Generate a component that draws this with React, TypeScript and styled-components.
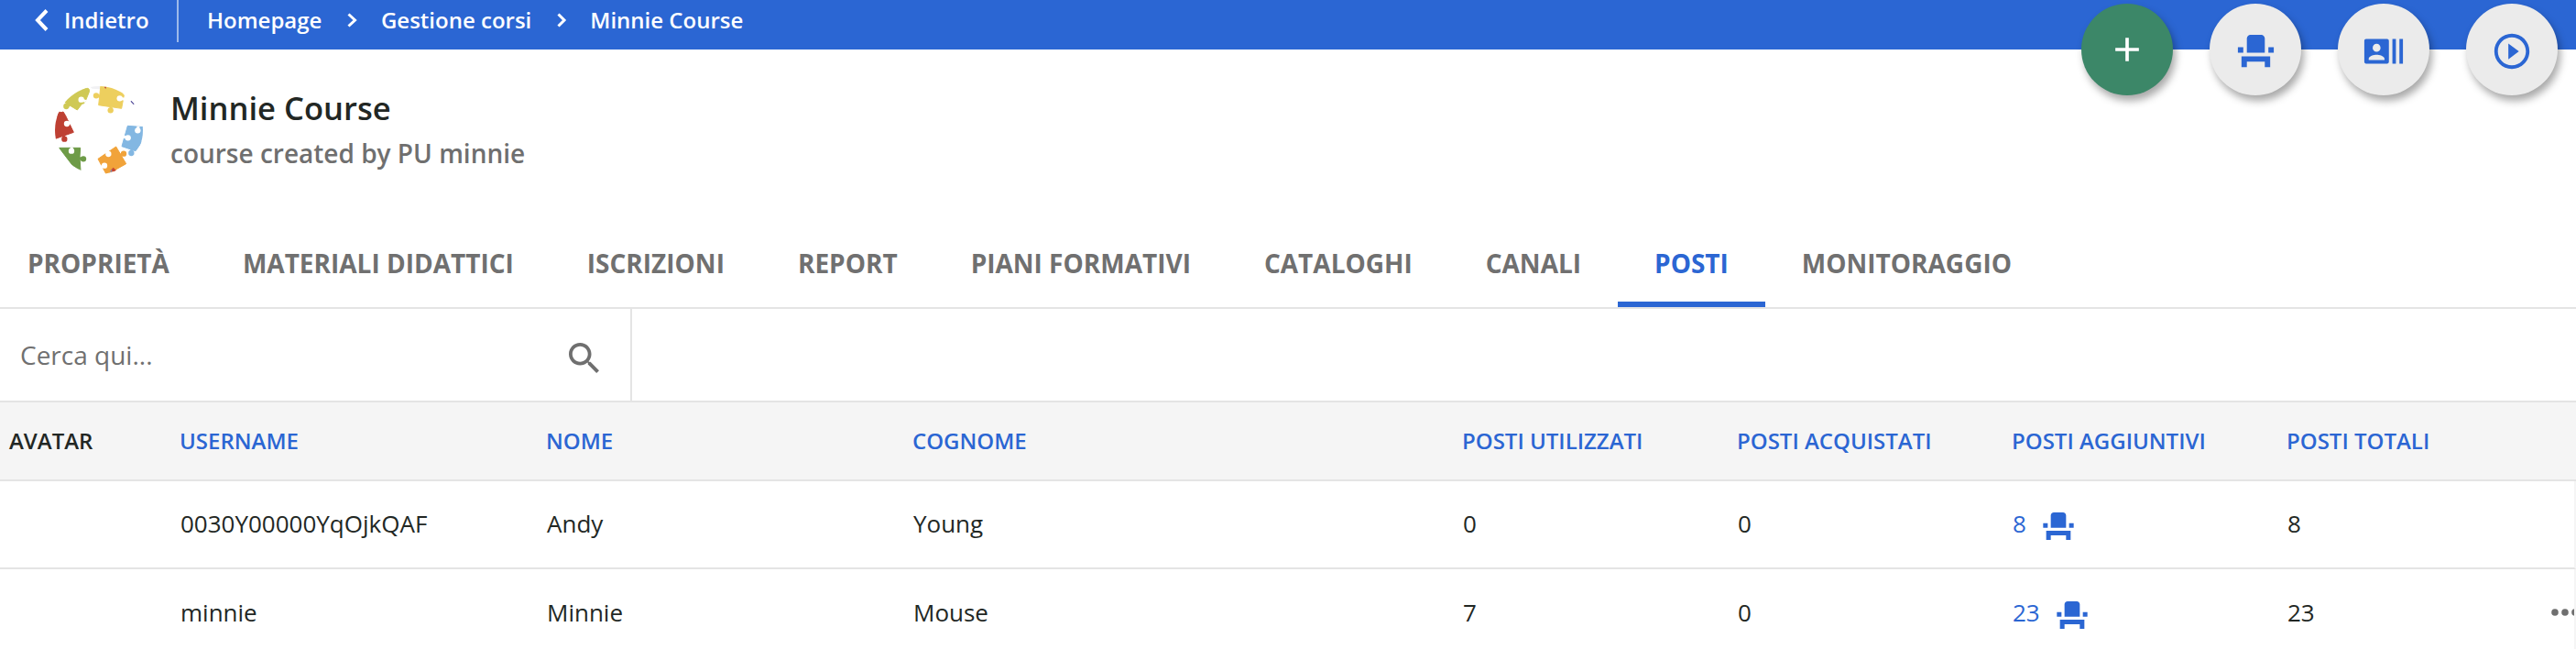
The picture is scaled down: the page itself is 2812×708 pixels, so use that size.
import React from "react";
import styled, { createGlobalStyle } from "styled-components";

const blue = "#2b66d3";

const GlobalStyle = createGlobalStyle`
  * { box-sizing: border-box; }
  body {
    margin: 0;
    background: #fff;
    color: #222724;
    font-family: "Open Sans", sans-serif;
    overflow: hidden;
  }
  button, input { font: inherit; border: 0; background: none; padding: 0; margin: 0; outline: 0; }
  svg { display: block; flex: none; }
`;

const Page = styled.div`
  width: 2812px;
  height: 708px;
  overflow: hidden;
  position: relative;
`;

const TopBar = styled.nav`
  display: flex;
  height: 54px;
  background: ${blue};
  color: #fff;
  font-size: 24px;
  font-weight: 600;
  line-height: 44px;
  padding-left: 37px;
`;

const BackLink = styled.a`
  display: flex;
  align-items: center;
  width: 158px;
  height: 46px;
  padding-bottom: 2px;
  gap: 17px;
  border-right: 2px solid #9db9ea;
  white-space: nowrap;
`;

const Crumbs = styled.div`
  display: flex;
  align-items: center;
  height: 44px;
  margin-left: 31px;
  gap: 27px;
`;

const Actions = styled.div`
  position: absolute;
  top: 4px;
  right: 20px;
  display: flex;
  gap: 40px;
`;

const RoundButton = styled.button<{ $primary?: boolean }>`
  display: flex;
  align-items: center;
  justify-content: center;
  width: 100px;
  height: 100px;
  padding-top: ${(p) => (p.$primary ? 0 : 3)}px;
  border-radius: 50%;
  background: ${(p) => (p.$primary ? "#3c8768" : "#ebebeb")};
  color: ${(p) => (p.$primary ? "#fff" : blue)};
  box-shadow: 3px 6px 8px rgba(0, 0, 0, 0.34);
`;

const CourseHeader = styled.header`
  display: flex;
  height: 187px;
  padding: 40px 0 0 60px;
`;

const CourseText = styled.div`
  margin-left: 30px;
`;

const CourseTitle = styled.h1`
  margin: 0;
  font-size: 34.600px;
  font-weight: 600;
  line-height: 48px;
`;

const CourseSubtitle = styled.p`
  margin: 3px 0 0;
  font-size: 28px;
  font-weight: 600;
  line-height: 44px;
  color: #6f6f6f;
`;

const Tabs = styled.div`
  display: flex;
  height: 96px;
  margin-left: -10px;
  border-bottom: 2px solid #e4e4e4;
`;

const Tab = styled.a<{ $active?: boolean }>`
  height: 94px;
  padding: 0 40px;
  font-size: 28px;
  font-weight: 700;
  line-height: 92px;
  white-space: nowrap;
  color: ${(p) => (p.$active ? blue : "#707070")};
  box-shadow: ${(p) => (p.$active ? `inset 0 -6px 0 ${blue}` : "none")};
`;

const SearchRow = styled.div`
  display: flex;
  height: 102px;
  border-bottom: 2px solid #e4e4e4;
`;

const SearchBox = styled.label`
  display: flex;
  align-items: center;
  width: 690px;
  padding: 0 34px 0 22px;
  border-right: 2px solid #e4e4e4;

  svg { margin-top: 6px; }
`;

const SearchInput = styled.input`
  flex: 1;
  font-size: 28px;
  &::placeholder { color: #707070; opacity: 1; }
`;

const Table = styled.div`
  width: 2812px;
`;

const Row = styled.div<{ $head?: boolean; $first?: boolean }>`
  display: grid;
  grid-template-columns: 186px 400px 400px 600px 300px 300px 300px 289px 25px;
  align-items: center;
  height: ${(p) => (p.$head ? 86 : 96)}px;
  padding: 0 0 ${(p) => (p.$first ? 2 : 0)}px 10px;
  background: ${(p) => (p.$head ? "#f5f5f5" : "#fff")};
  border-bottom: 2px solid #e4e4e4;
  border-right: ${(p) => (p.$head ? "none" : "2px solid #f5f5f5")};
  font-size: 26px;
`;

const HeadCell = styled.div<{ $plain?: boolean }>`
  font-size: 24px;
  font-weight: 600;
  line-height: 32px;
  white-space: nowrap;
  color: ${(p) => (p.$plain ? "#222724" : blue)};
`;

const Cell = styled.div<{ $link?: boolean }>`
  display: flex;
  gap: 15px;
  align-items: center;
  padding-left: 1px;
  line-height: 36px;
  color: ${(p) => (p.$link ? blue : "#222724")};

  svg { margin-top: 6px; }
`;

const MoreButton = styled.button`
  display: flex;
  width: 25px;
  overflow: hidden;
  color: #6f6f6f;
`;

const Chevron = ({ w, h, left, stroke }: { w: number; h: number; left?: boolean; stroke: number }) => (
  <svg width={w} height={h} viewBox={`0 0 ${w} ${h}`} fill="none" stroke="currentColor" strokeWidth={stroke} overflow="visible">
    <path d={left ? `M${w - 2} 1.5L4 ${h / 2}L${w - 2} ${h - 1.5}` : `M2.5 1.5L${w - 1} ${h / 2}L2.5 ${h - 1.5}`} />
  </svg>
);

const SeatIcon = ({ size }: { size: number }) => (
  <svg width={size} height={size} viewBox="0 0 24 24" fill="currentColor">
    <path d="M4 18v3h3v-3h10v3h3v-6H4zm15-8h3v3h-3zM2 10h3v3H2zm15 3H7V5c0-1.100.9-2 2-2h6c1.100 0 2 .9 2 2v8z" />
  </svg>
);

const PlusIcon = () => (
  <svg width="44" height="44" viewBox="0 0 24 24" fill="currentColor">
    <path d="M19 13h-6v6h-2v-6H5v-2h6V5h2v6h6v2z" />
  </svg>
);

const ContactsIcon = () => (
  <svg width="46" height="46" viewBox="0 0 24 24" fill="currentColor">
    <path d="M21 5v14h2V5h-2zm-4 14h2V5h-2v14zM14 5H2c-.55 0-1 .45-1 1v12c0 .55.45 1 1 1h12c.55 0 1-.45 1-1V6c0-.55-.45-1-1-1zM8 7.750c1.240 0 2.250 1.010 2.250 2.250S9.240 12.250 8 12.250 5.750 11.240 5.750 10 6.760 7.750 8 7.750zM12.500 17h-9v-.75c0-1.500 3-2.250 4.500-2.250s4.500.75 4.500 2.250V17z" />
  </svg>
);

const PlayIcon = () => (
  <svg width="46" height="46" viewBox="0 0 24 24" fill="currentColor">
    <path d="M10 16.500l6-4.500-6-4.500v9zM12 2C6.480 2 2 6.480 2 12s4.480 10 10 10 10-4.480 10-10S17.520 2 12 2zm0 18c-4.410 0-8-3.590-8-8s3.590-8 8-8 8 3.590 8 8-3.590 8-8 8z" />
  </svg>
);

const SearchIcon = () => (
  <svg width="33" height="33" viewBox="3 3 17.5 17.5" fill="#6f6f6f">
    <path d="M15.500 14h-.79l-.28-.27C15.410 12.590 16 11.110 16 9.500 16 5.910 13.090 3 9.500 3S3 5.910 3 9.500 5.910 16 9.500 16c1.610 0 3.090-.59 4.230-1.570l.27.28v.79l5 4.990L20.490 19l-4.990-5zm-6 0C7.010 14 5 11.990 5 9.500S7.010 5 9.500 5 14 7.010 14 9.500 11.990 14 9.500 14z" />
  </svg>
);

const DotsIcon = () => (
  <svg width="31" height="8" viewBox="0 0 31 8" fill="currentColor">
    <circle cx="4" cy="4" r="3.800" />
    <circle cx="15" cy="4" r="3.800" />
    <circle cx="26" cy="4" r="3.800" />
  </svg>
);

type Knob = [cx: number, cy: number, edgeX: number, edgeY: number];

/* A puzzle piece: a body, knobs that stick out of it and sockets cut into it. */
const Piece = ({ d, fill, knobs, sockets }: { d: string; fill: string; knobs: Knob[]; sockets: Knob[] }) => (
  <g>
    <path d={d} fill={fill} stroke={fill} strokeWidth="3" strokeLinejoin="round" />
    {[...knobs.map((k) => [k, fill] as const), ...sockets.map((k) => [k, "#fff"] as const)].map(([[cx, cy, ex, ey], color]) => (
      <g key={`${cx}-${cy}`} fill={color} stroke={color}>
        <circle cx={cx} cy={cy} r="9.500" stroke="none" />
        <path d={`M${cx} ${cy}L${ex} ${ey}`} strokeWidth="9" />
      </g>
    ))}
  </g>
);

/* Ring of puzzle pieces, clipped to the round course thumbnail. */
const CourseLogo = () => (
  <svg width="96" height="96" viewBox="0 0 288 288">
    <defs>
      <clipPath id="thumb">
        <circle cx="144" cy="144" r="144" />
      </clipPath>
    </defs>
    <g clipPath="url(#thumb)">
      <path fill="#f1f1f3" d="M112 0H148V10L122 8Z" />
      <Piece fill="#cfc955" d="M30 50Q60 12 106 6Q117 10 110 24L101 46Q94 62 90 56L73 78L37 56Z" knobs={[[37, 66, 48, 62]]} sockets={[[86, 44, 101, 50]]} />
      <Piece fill="#edcf5e" d="M150 -4H200L226 30L218 73L143 62Z" knobs={[[135, 31, 149, 34], [182, 79, 184, 68]]} sockets={[[212, 40, 228, 43]]} />
      <Piece fill="#be4033" d="M-4 104L6 92L27 84L34 95L61 151L-4 174Z" knobs={[[14, 93, 18, 100], [31, 173, 28, 162]]} sockets={[[39, 123, 54, 119]]} />
      <Piece fill="#83b7e2" d="M238 130L292 134V172L264 212L219 197Z" knobs={[[250, 219, 252, 206]]} sockets={[[271, 145, 273, 131], [239, 169, 223, 165]]} />
      <Piece fill="#6e9b47" d="M14 202L83 202L81 232L84 278L58 260Z" knobs={[[93, 238, 80, 236]]} sockets={[[54, 212, 55, 200]]} />
      <Piece fill="#f1a33a" d="M141 238L200 198L233 254L169 290Z" knobs={[[225, 221, 213, 226]]} sockets={[[175, 222, 167, 210], [162, 260, 152, 264]]} />
      <path fill="#b84739" d="M161 2L169 1L166 9Z" />
      <path fill="#c9472f" d="M182 275L191 266L201 276L192 283Z" />
      <path fill="#8d8fb0" d="M180 279L187 271L186 284Z" />
      <path fill="none" stroke="#57509b" strokeWidth="4" d="M249 49L259 59" />
    </g>
  </svg>
);

const tabs = ["PROPRIETÀ", "MATERIALI DIDATTICI", "ISCRIZIONI", "REPORT", "PIANI FORMATIVI", "CATALOGHI", "CANALI", "POSTI", "MONITORAGGIO"];
const columns = ["AVATAR", "USERNAME", "NOME", "COGNOME", "POSTI UTILIZZATI", "POSTI ACQUISTATI", "POSTI AGGIUNTIVI", "POSTI TOTALI"];
const users = [
  { username: "0030Y00000YqOjkQAF", first: "Andy", last: "Young", used: 0, bought: 0, extra: 8, total: 8, menu: false },
  { username: "minnie", first: "Minnie", last: "Mouse", used: 7, bought: 0, extra: 23, total: 23, menu: true },
];

export default function App() {
  return (
    <Page>
      <GlobalStyle />
      <TopBar>
        <BackLink>
          <Chevron w={16} h={24} left stroke={4} />
          Indietro
        </BackLink>
        <Crumbs>
          <span>Homepage</span>
          <Chevron w={10.5} h={16} stroke={3} />
          <span>Gestione corsi</span>
          <Chevron w={10} h={16} stroke={3} />
          <span>Minnie Course</span>
        </Crumbs>
      </TopBar>
      <Actions>
        <RoundButton $primary aria-label="Aggiungi"><PlusIcon /></RoundButton>
        <RoundButton aria-label="Posti"><SeatIcon size={47} /></RoundButton>
        <RoundButton aria-label="Iscritti"><ContactsIcon /></RoundButton>
        <RoundButton aria-label="Avvia"><PlayIcon /></RoundButton>
      </Actions>
      <CourseHeader>
        <CourseLogo />
        <CourseText>
          <CourseTitle>Minnie Course</CourseTitle>
          <CourseSubtitle>course created by PU minnie</CourseSubtitle>
        </CourseText>
      </CourseHeader>
      <Tabs>
        {tabs.map((t) => <Tab key={t} $active={t === "POSTI"}>{t}</Tab>)}
      </Tabs>
      <SearchRow>
        <SearchBox>
          <SearchInput placeholder="Cerca qui..." />
          <SearchIcon />
        </SearchBox>
      </SearchRow>
      <Table>
        <Row $head>
          {columns.map((c, i) => <HeadCell key={c} $plain={i === 0}>{c}</HeadCell>)}
        </Row>
        {users.map((u, i) => (
          <Row key={u.username} $first={i === 0}>
            <Cell />
            <Cell>{u.username}</Cell>
            <Cell>{u.first}</Cell>
            <Cell>{u.last}</Cell>
            <Cell>{u.used}</Cell>
            <Cell>{u.bought}</Cell>
            <Cell $link>{u.extra}<SeatIcon size={40} /></Cell>
            <Cell>{u.total}</Cell>
            {u.menu && <MoreButton aria-label="Altro"><DotsIcon /></MoreButton>}
          </Row>
        ))}
      </Table>
    </Page>
  );
}
